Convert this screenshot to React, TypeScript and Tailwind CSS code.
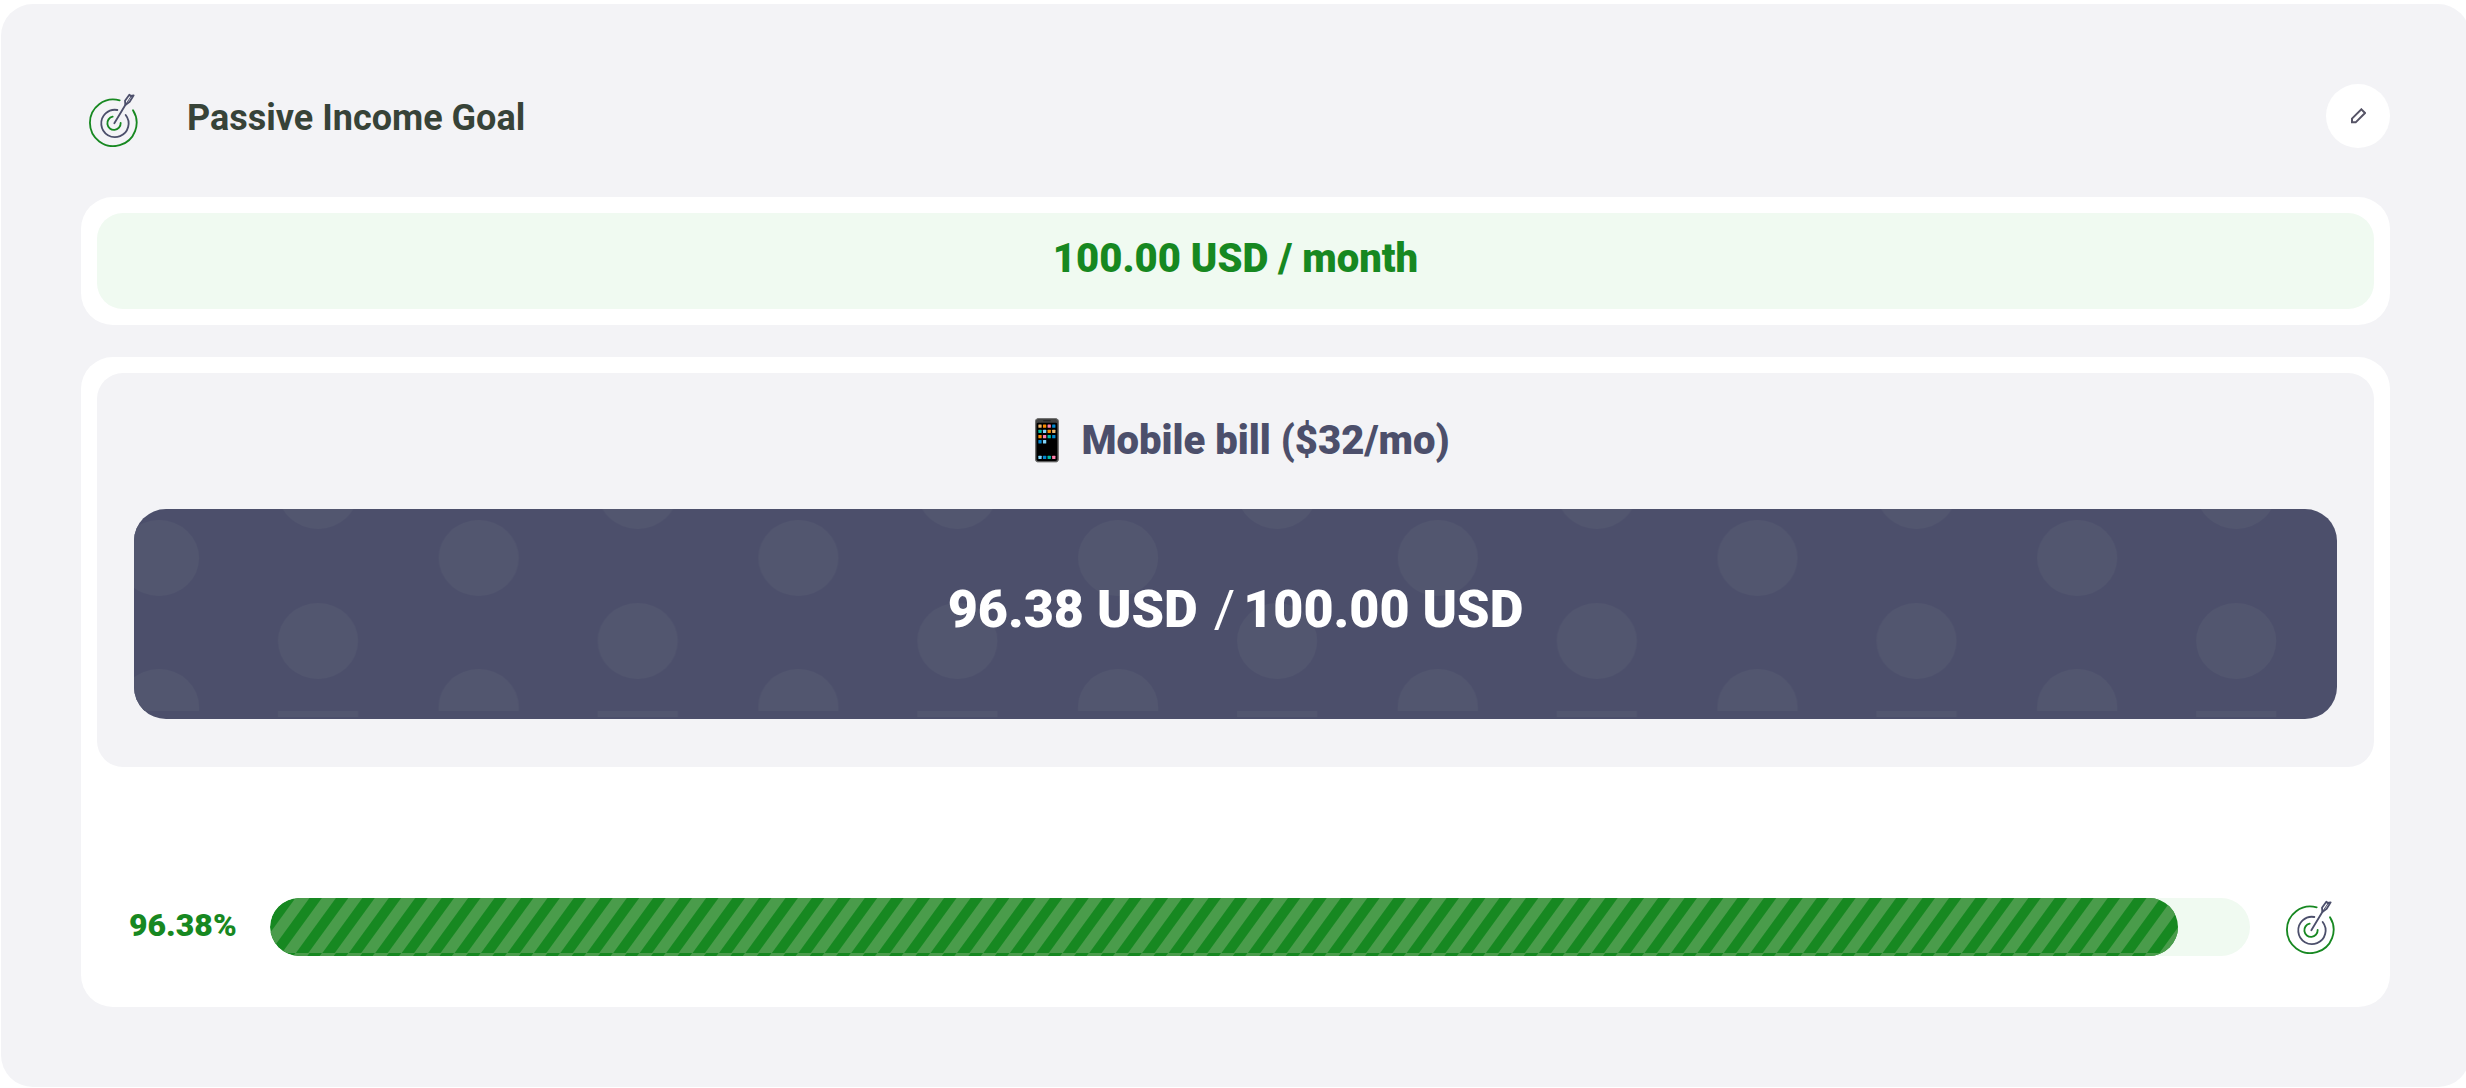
const progress = 96.38

function TargetIcon() {
  return (
    <svg className="h-[54px] w-[50px] shrink-0" viewBox="24 27 150 162" fill="none" strokeLinecap="round" strokeLinejoin="round" aria-hidden="true">
      <g stroke="#178821" strokeWidth="5.5">
        <path d="M116 49A70 70 0 1 0 156 79" />
        <path d="M95 98A20 20 0 1 0 119 117" />
      </g>
      <g stroke="#4c4f6b" strokeWidth="5.5">
        <path d="M109 78A41 41 0 1 0 134 93" />
        <path d="M100 118L133 63" />
        <path d="M133 63L132 50L145 32L149 36L158 34L146 53Z" />
        <path d="M137 57L149 39" strokeWidth="3" />
      </g>
    </svg>
  )
}

function PencilIcon() {
  return (
    <svg className="h-4 w-4" viewBox="0 0 48 48" fill="none" stroke="#565466" strokeWidth="6" aria-hidden="true">
      <path d="M6 43V32L34 4L45 15L17 43Z" />
    </svg>
  )
}

function DotPattern() {
  return (
    <svg className="absolute inset-0 h-full w-full" aria-hidden="true">
      <defs>
        <pattern id="dots" width="319.7" height="210" patternUnits="userSpaceOnUse">
          <g fill="#52566f">
            <ellipse cx="25" cy="49" rx="40" ry="38" />
            <ellipse cx="344.7" cy="49" rx="40" ry="38" />
            <ellipse cx="184" cy="-18" rx="40" ry="38" />
            <ellipse cx="184" cy="132" rx="40" ry="38" />
            <path d="M-15 202V198A40 38 0 0 1 65 198V202Z" />
            <path d="M304.7 202V198A40 38 0 0 1 384.7 198V202Z" />
            <rect x="144" y="202" width="80" height="6" />
          </g>
        </pattern>
      </defs>
      <rect width="100%" height="100%" fill="url(#dots)" />
    </svg>
  )
}

function StripePattern() {
  return (
    <svg className="h-full w-full" aria-hidden="true">
      <defs>
        <pattern id="stripes" width="238" height="55" patternUnits="userSpaceOnUse">
          {Array.from({ length: 12 }, (_, i) => (
            <path key={i} d={`M${(i * 238) / 9 - 1} 0h14l-40 55h-14z`} fill="#4a9c4b" />
          ))}
        </pattern>
      </defs>
      <rect width="100%" height="100%" fill="url(#stripes)" />
    </svg>
  )
}

export default function App() {
  return (
    <div className="overflow-hidden bg-white pt-1 pl-px font-['Roboto','Liberation_Sans',sans-serif]">
      <main className="-mr-1 rounded-[32px] bg-[#f3f3f6] p-20">
        {/* Header */}
        <header className="flex h-16 items-center justify-between">
          <div className="flex items-center gap-12 pt-2 pl-2">
            <TargetIcon />
            <h1 className="pb-1 text-[36px] leading-[48px] font-bold text-[#374338]">Passive Income Goal</h1>
          </div>
          <button type="button" aria-label="Edit goal" className="flex h-16 w-16 items-center justify-center rounded-full bg-white">
            <PencilIcon />
          </button>
        </header>

        {/* Goal amount */}
        <section className="mt-[49px] rounded-[32px] bg-white p-4">
          <p className="rounded-[26px] bg-[#f0faf1] pt-[22px] pb-[26px] text-center text-[40px] leading-[48px] font-black text-[#178821]">
            100.00 USD / month
          </p>
        </section>

        {/* Progress */}
        <section className="mt-8 rounded-[32px] bg-white">
          <div className="p-4">
            <div className="rounded-[26px] bg-[#f3f3f6] px-[37px] pt-11 pb-12 text-center">
              <h2 className="pb-11 text-[40px] leading-[48px] font-black text-[#4c4f6b]">📱 Mobile bill ($32/mo)</h2>
              <div className="relative overflow-hidden rounded-[32px] bg-[#4c4f6b]">
                <DotPattern />
                <p className="relative flex h-[210px] items-center justify-center pb-2 text-[52px] leading-[64px] font-black text-white">
                  <span>96.38 USD</span>
                  <span className="pr-2 pl-4 font-normal">/</span>
                  <span>100.00 USD</span>
                </p>
              </div>
            </div>
          </div>

          <div className="flex items-center pt-[115px] pr-[54px] pb-[51px] pl-12">
            <span className="w-[141px] shrink-0 pb-1 text-[32px] leading-[40px] font-black text-[#178821]">{progress}%</span>
            <div
              className="h-[58px] flex-1 overflow-hidden rounded-full bg-[#f0faf1]"
              role="progressbar"
              aria-label="Goal progress"
              aria-valuenow={progress}
              aria-valuemin={0}
              aria-valuemax={100}
            >
              <div className="h-full overflow-hidden rounded-full bg-[#178821]" style={{ width: `${progress}%` }}>
                <StripePattern />
              </div>
            </div>
            <div className="ml-9">
              <TargetIcon />
            </div>
          </div>
        </section>
      </main>
    </div>
  )
}
